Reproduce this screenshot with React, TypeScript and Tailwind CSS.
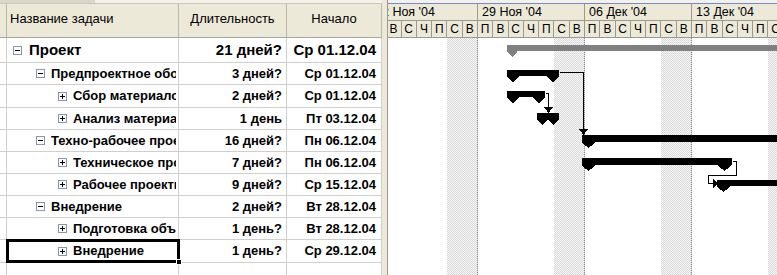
import React from 'react';

type Row = {
  name: string;
  level: number;
  open: boolean;
  dur: string;
  start: string;
  h: string;
  big?: boolean;
  selected?: boolean;
};

const rows: Row[] = [
  { name: 'Проект', level: 0, open: true, dur: '21 дней?', start: 'Ср 01.12.04', h: 'h-[25px]', big: true },
  { name: 'Предпроектное обоснование', level: 1, open: true, dur: '3 дней?', start: 'Ср 01.12.04', h: 'h-[22px]' },
  { name: 'Сбор материалов', level: 2, open: false, dur: '2 дней?', start: 'Ср 01.12.04', h: 'h-[23px]' },
  { name: 'Анализ материалов', level: 2, open: false, dur: '1 день', start: 'Пт 03.12.04', h: 'h-[22px]' },
  { name: 'Техно-рабочее проектирование', level: 1, open: true, dur: '16 дней?', start: 'Пн 06.12.04', h: 'h-[22px]' },
  { name: 'Техническое проектирование', level: 2, open: false, dur: '7 дней?', start: 'Пн 06.12.04', h: 'h-[22px]' },
  { name: 'Рабочее проектирование', level: 2, open: false, dur: '9 дней?', start: 'Ср 15.12.04', h: 'h-[22px]' },
  { name: 'Внедрение', level: 1, open: true, dur: '2 дней?', start: 'Вт 28.12.04', h: 'h-[22px]' },
  { name: 'Подготовка объекта', level: 2, open: false, dur: '1 день?', start: 'Вт 28.12.04', h: 'h-[22px]' },
  { name: 'Внедрение', level: 2, open: false, dur: '1 день?', start: 'Ср 29.12.04', h: 'h-[23px]', selected: true },
];

const indent = ['pl-[6px] gap-[7px]', 'pl-[29px] gap-[6px]', 'pl-[51px] gap-[6px]'];

const weeks = ["22 Ноя '04", "29 Ноя '04", "06 Дек '04", "13 Дек '04", "20 Дек '04"];
const dayLetters = ['П', 'В', 'С', 'Ч', 'П', 'С', 'В'];

// left edge of the gantt pane in page coords
const X0 = 388;

// summary bars: bar + pentagon caps hanging under the ends
const bars = [
  { x1: 507, x2: 800, y: 45, h: 6, w: 10, caps: [507], fill: '#808080' },
  { x1: 507, x2: 559, y: 70, h: 6, w: 12, caps: [507, 547], fill: '#000' },
  { x1: 507, x2: 545, y: 91, h: 6, w: 12, caps: [507, 533], fill: '#000' },
  { x1: 537, x2: 559, y: 113, h: 6, w: 11, caps: [537, 548], fill: '#000' },
  { x1: 582, x2: 800, y: 135, h: 7, w: 13, caps: [582], fill: '#000' },
  { x1: 582, x2: 732, y: 158, h: 7, w: 13, caps: [582, 718], fill: '#000' },
  { x1: 717, x2: 800, y: 180, h: 6, w: 13, caps: [717], fill: '#000' },
];

const cap = (x: number, y: number, w: number, h: number) => {
  const a = x - X0;
  return `${a},${y} ${a + w},${y} ${a + w},${y + h + 1} ${a + w / 2},${y + h + 6} ${a},${y + h + 1}`;
};

const pts = (list: number[][]) => list.map(([x, y]) => `${x - X0 + 0.5},${y + 0.5}`).join(' ');

function ToggleBox({ open }: { open: boolean }) {
  return (
    <span className="relative inline-block w-[9px] h-[9px] border border-[#8796b4] bg-white shrink-0">
      <span className="absolute left-[1px] top-[3px] w-[5px] h-[1px] bg-black" />
      {!open && <span className="absolute left-[3px] top-[1px] w-[1px] h-[5px] bg-black" />}
    </span>
  );
}

const GanttBars = () => (
  <svg className="absolute left-0 top-0 pointer-events-none" width={389} height={275} shapeRendering="crispEdges">
    {bars.map((b, i) => (
      <g key={i} fill={b.fill}>
        <rect x={b.x1 - X0} y={b.y} width={b.x2 - b.x1} height={b.h} />
        {b.caps.map((c) => (
          <polygon key={c} points={cap(c, b.y, b.w, b.h)} />
        ))}
      </g>
    ))}
    <g stroke="#000" strokeWidth={1} fill="none">
      <polyline points={pts([[559, 72], [583, 72], [583, 129]])} />
      <polyline points={pts([[545, 93], [548, 93], [548, 107]])} />
      <polyline points={pts([[732, 161], [736, 161], [736, 175], [708, 175], [708, 183], [713, 183]])} />
    </g>
    <g fill="#000">
      <polygon points={`${579 - X0},129 ${588 - X0},129 ${583.5 - X0},135`} />
      <polygon points={`${544 - X0},107 ${553 - X0},107 ${548.5 - X0},113`} />
      <polygon points={`${713 - X0},179 ${713 - X0},188 ${718 - X0},183.5`} />
    </g>
  </svg>
);

export default function App() {
  return (
    <div className="w-[777px] h-[275px] overflow-hidden flex bg-white text-black font-['Liberation_Sans',Arial,sans-serif]">
      {/* task table */}
      <div className="w-[382px] shrink-0 flex flex-col">
        <div className="h-[4px] flex border-b border-[#c9c6ba]">
          <div className="w-[95px] bg-[#d9d6ca]" />
          <div className="flex-1 bg-[#f3f1ea]" />
        </div>
        <div className="h-[34px] flex bg-[#ece9d8] border-b border-[#a9a69a] text-[13px]">
          <div className="w-[7px] border-r border-[#b9b6aa]" />
          <div className="w-[172px] border-r border-[#b9b6aa] pl-[3px] pt-[5px]">Название задачи</div>
          <div className="w-[108px] border-r border-[#b9b6aa] pt-[5px] text-center">Длительность</div>
          <div className="w-[95px] border-r border-[#b9b6aa] pt-[5px] text-center">Начало</div>
        </div>
        {rows.map((r, i) => (
          <div key={i} className={`flex ${r.h} border-b border-[#cfcfcf] font-bold ${r.big ? 'text-[15px]' : 'text-[13px]'}`}>
            <div className="w-[7px] border-r border-[#cfcfcf]" />
            <div className={`relative w-[172px] shrink-0 border-r border-[#cfcfcf] pr-[2px] flex items-center ${indent[r.level]}`}>
              <ToggleBox open={r.open} />
              <span className="min-w-0 flex-1 overflow-hidden whitespace-nowrap">{r.name}</span>
              {r.selected && (
                <div className="absolute left-[-1px] right-[-2px] top-[-1px] bottom-[-1px] border-[3px] border-black">
                  <div className="absolute right-[-5px] bottom-[-5px] w-[6px] h-[6px] bg-black border border-white" />
                </div>
              )}
            </div>
            <div className="w-[108px] shrink-0 border-r border-[#cfcfcf] pr-[4px] flex items-center justify-end whitespace-nowrap">{r.dur}</div>
            <div className="w-[95px] shrink-0 border-r border-[#cfcfcf] pr-[5px] flex items-center justify-end whitespace-nowrap">{r.start}</div>
          </div>
        ))}
        <div className="flex flex-1">
          <div className="w-[7px] border-r border-[#cfcfcf]" />
          <div className="w-[172px] border-r border-[#cfcfcf]" />
          <div className="w-[108px] border-r border-[#cfcfcf]" />
          <div className="w-[95px] border-r border-[#cfcfcf]" />
        </div>
      </div>

      {/* splitter */}
      <div className="w-[6px] shrink-0 bg-[#ece9d8] border-r border-[#9d9a8c]" />

      {/* gantt */}
      <div className="relative flex-1 flex flex-col overflow-hidden">
        <div className="h-[4px] bg-[#f5efef] border-b border-[#6f8fc8]" />
        <div className="flex flex-1 ml-[-17px]">
          {weeks.map((w) => (
            <div key={w} className="w-[107px] shrink-0 flex flex-col">
              <div className="h-[17px] bg-[#ece9d8] border-r border-b border-[#9d9a8c] pl-[4px] text-[12.5px] leading-[17px] whitespace-nowrap overflow-hidden">
                {w}
              </div>
              <div className="flex flex-1">
                {dayLetters.map((d, i) => (
                  <div key={i} className="flex-1 flex flex-col">
                    <div className="h-[17px] bg-[#ece9d8] border-r border-b border-[#9d9a8c] text-[12px] leading-[16px] text-center">
                      {d}
                    </div>
                    {i >= 5 ? (
                      <div
                        className={`flex-1 bg-[conic-gradient(#d9d9d9_25%,#f7f7f7_0_50%,#d9d9d9_0_75%,#f7f7f7_0)] bg-[length:2px_2px] ${
                          i === 6 ? 'border-r border-dotted border-[#8c8c8c]' : ''
                        }`}
                      />
                    ) : (
                      <div className="flex-1" />
                    )}
                  </div>
                ))}
              </div>
            </div>
          ))}
        </div>
        <GanttBars />
      </div>
    </div>
  );
}
